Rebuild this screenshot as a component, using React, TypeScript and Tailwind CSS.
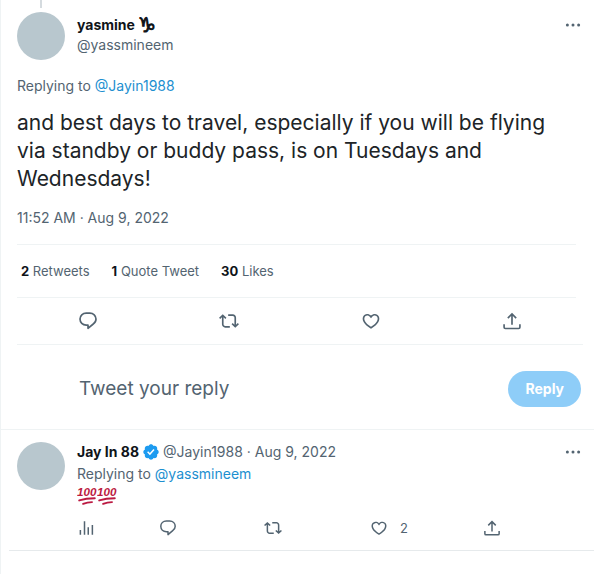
import React from "react";

type IconProps = { className?: string };

const ReplyIcon = ({ className }: IconProps) => (
  <svg viewBox="0 0 24 24" fill="none" stroke="currentColor" strokeWidth="2" strokeLinejoin="round" className={className} aria-hidden="true">
    <path d="M9.8 2.5h4.4c4.200 0 7.400 3.100 7.400 7.200 0 2.500-1.300 4.600-3.300 5.900L12 20.800v-3.900H9.800c-4.200 0-7.400-3.100-7.400-7.200s3.200-7.200 7.400-7.200z" />
  </svg>
);

const RetweetIcon = ({ className }: IconProps) => (
  <svg viewBox="0 0 24 24" fill="currentColor" className={className} aria-hidden="true">
    <path d="M4.5 3.88l4.432 4.14-1.364 1.46L5.5 7.55V16c0 1.1.896 2 2 2H13v2H7.5c-2.209 0-4-1.79-4-4V7.55L1.432 9.48.068 8.02 4.5 3.88zM16.5 6H11V4h5.5c2.209 0 4 1.79 4 4v8.45l2.068-1.93 1.364 1.46-4.432 4.14-4.432-4.14 1.364-1.46 2.068 1.93V8c0-1.1-.896-2-2-2z" />
  </svg>
);

const LikeIcon = ({ className }: IconProps) => (
  <svg viewBox="0 0 24 24" fill="currentColor" className={className} aria-hidden="true">
    <path d="M16.697 5.5c-1.222-.06-2.679.51-3.89 2.16l-.805 1.09-.806-1.09C9.984 6.01 8.526 5.44 7.304 5.5c-1.243.07-2.349.78-2.91 1.91-.552 1.12-.633 2.78.479 4.82 1.074 1.97 3.257 4.27 7.129 6.61 3.87-2.34 6.052-4.64 7.126-6.61 1.111-2.04 1.03-3.7.477-4.82-.561-1.13-1.666-1.84-2.908-1.91zm4.187 7.69c-1.351 2.48-4.001 5.12-8.379 7.67l-.503.3-.504-.3c-4.379-2.55-7.029-5.19-8.382-7.67-1.36-2.5-1.41-4.86-.514-6.67.887-1.79 2.647-2.91 4.601-3.01 1.651-.09 3.368.56 4.798 2.01 1.429-1.45 3.146-2.1 4.796-2.01 1.954.1 3.714 1.22 4.601 3.01.896 1.81.846 4.17-.514 6.67z" />
  </svg>
);

const ShareIcon = ({ className }: IconProps) => (
  <svg viewBox="0 0 24 24" fill="none" stroke="currentColor" strokeWidth="2" className={className} aria-hidden="true">
    <path d="M12 16.5V4M7 8.500l5-5 5 5" />
    <path d="M2.5 16v3.500c0 .8.7 1.500 1.500 1.500h16c.8 0 1.500-.7 1.500-1.500V16" />
  </svg>
);

const StatsIcon = ({ className }: IconProps) => (
  <svg viewBox="0 0 24 24" fill="none" stroke="currentColor" strokeWidth="2" className={className} aria-hidden="true">
    <path d="M4.5 21v-6.500M10 21V3M15 21V11M20.5 21V8" />
  </svg>
);

const MoreIcon = ({ className }: IconProps) => (
  <svg viewBox="0 0 24 24" fill="currentColor" className={className} aria-hidden="true">
    <circle cx="4.5" cy="12" r="2" />
    <circle cx="12" cy="12" r="2" />
    <circle cx="19.5" cy="12" r="2" />
  </svg>
);

const VerifiedIcon = ({ className }: IconProps) => (
  <svg viewBox="0 0 24 24" fill="currentColor" className={className} role="img" aria-label="Verified account">
    <path d="M22.25 12c0-1.43-.88-2.67-2.19-3.34.46-1.39.2-2.9-.81-3.91s-2.52-1.27-3.91-.81c-.66-1.31-1.91-2.19-3.34-2.19s-2.67.88-3.33 2.19c-1.4-.46-2.91-.2-3.92.81s-1.26 2.52-.8 3.91c-1.31.67-2.2 1.91-2.2 3.34s.89 2.67 2.2 3.34c-.46 1.39-.21 2.9.8 3.91s2.52 1.26 3.91.81c.67 1.31 1.91 2.19 3.34 2.19s2.68-.88 3.34-2.19c1.39.45 2.9.2 3.91-.81s1.27-2.52.81-3.91c1.31-.67 2.19-1.91 2.19-3.34zm-11.71 4.2L6.8 12.46l1.41-1.42 2.26 2.26 4.8-5.23 1.47 1.36-6.2 6.77z" />
  </svg>
);

// "100 points" emoji
const HundredEmoji = () => (
  <svg viewBox="0 0 36 36" className="h-5 w-5" role="img" aria-label="100 points">
    <text x="0" y="18" fill="#bb1a42" fontSize="21" fontWeight="700" fontStyle="italic" fontFamily="Liberation Sans, sans-serif">
      100
    </text>
    <g fill="none" stroke="#bb1a42" strokeWidth="3.5" strokeLinecap="round">
      <path d="M4 26c9-3 19-4 28-4" />
      <path d="M11 32c5-2 10-3 16-3" />
    </g>
  </svg>
);

const stats = [
  { value: 2, label: "Retweets" },
  { value: 1, label: "Quote Tweet" },
  { value: 30, label: "Likes" },
];

const actions = [
  { label: "Reply", Icon: ReplyIcon },
  { label: "Retweet", Icon: RetweetIcon },
  { label: "Like", Icon: LikeIcon },
  { label: "Share", Icon: ShareIcon },
];

const Avatar = () => <div className="h-12 w-12 shrink-0 rounded-full bg-[#b8c7ce]" />;

const MoreButton = () => (
  <button type="button" aria-label="More" className="flex h-5 w-5 items-center justify-center text-[#536471]">
    <MoreIcon className="h-[18px] w-[18px]" />
  </button>
);

const TweetDetail = () => (
  <article className="pl-4">
    <div className="flex h-3 w-12 justify-center">
      <div className="h-2 w-0.5 bg-[#d5dbdf]" />
    </div>
    <header className="flex items-start gap-3 pr-[11px]">
      <Avatar />
      <div className="flex-1 pt-[3px] leading-5">
        <div className="flex items-center justify-between">
          <p className="flex items-center gap-[3px] font-bold">
            yasmine <span className="font-['DejaVu_Sans'] text-[20px] leading-5 [-webkit-text-stroke:1px]">♑︎</span>
          </p>
          <MoreButton />
        </div>
        <p className="text-[#536471]">@yassmineem</p>
      </div>
    </header>

    <p className="mt-4 leading-5 text-[#536471]">
      Replying to <a href="#jayin1988" className="text-[#1d8fd0]">@Jayin1988</a>
    </p>
    <p className="mt-[13px] pr-5 text-[21px] leading-7 text-[#202427]">
      and best days to travel, especially if you will be flying via standby or buddy pass, is on Tuesdays and Wednesdays!
    </p>
    <p className="mt-[15px] leading-5 text-[#536471]">11:52 AM · Aug 9, 2022</p>

    <ul className="mt-4 mr-[18px] flex gap-[22px] border-y border-[#eff3f4] px-1 py-4 text-[13px] leading-5">
      {stats.map((s) => (
        <li key={s.label} className="text-[#536471]">
          <span className="font-bold text-[#0f1419]">{s.value}</span> {s.label}
        </li>
      ))}
    </ul>

    <div className="mr-[11px] flex border-b border-[#eff3f4] py-[13px] text-[#536471]">
      {actions.map(({ label, Icon }) => (
        <button key={label} type="button" aria-label={label} className="flex flex-1 justify-center">
          <Icon className="h-5 w-5" />
        </button>
      ))}
    </div>
  </article>
);

const ReplyForm = () => (
  <form className="flex items-center border-b border-[#eff3f4] pt-[26px] pr-[13px] pb-[22px] pl-[78px]" onSubmit={(e) => e.preventDefault()}>
    <input
      type="text"
      aria-label="Tweet your reply"
      placeholder="Tweet your reply"
      className="min-w-0 flex-1 text-[19px] outline-none placeholder:text-[#536471]"
    />
    <button type="submit" className="h-9 rounded-full bg-[#8ecdf8] px-[17px] font-bold text-white">
      Reply
    </button>
  </form>
);

const ReplyTweet = () => (
  <article className="ml-2 flex gap-3 border-b border-[#e6eaec] py-3 pr-[11px] pl-2">
    <Avatar />
    <div className="min-w-0 flex-1">
      <div className="flex items-center justify-between">
        <p className="flex items-center gap-[3px] leading-5">
          <span className="font-bold">Jay In 88</span>
          <VerifiedIcon className="h-[18px] w-[18px] text-[#1d9bf0]" />
          <span className="text-[#536471]">@Jayin1988 · Aug 9, 2022</span>
        </p>
        <MoreButton />
      </div>
      <p className="leading-6 text-[#536471]">
        Replying to <a href="#yassmineem" className="text-[#1d8fd0]">@yassmineem</a>
      </p>
      <p className="flex h-5 items-center">
        <HundredEmoji />
        <HundredEmoji />
      </p>
      <div className="mt-3 grid grid-cols-[82fr_105fr_106fr_113fr_100fr] items-center text-[#536471]">
        <button type="button" aria-label="View stats"><StatsIcon className="h-[18px] w-[18px]" /></button>
        <button type="button" aria-label="Reply"><ReplyIcon className="h-[18px] w-[18px]" /></button>
        <button type="button" aria-label="Retweet"><RetweetIcon className="h-[18px] w-[18px]" /></button>
        <button type="button" aria-label="Like" className="flex items-center gap-3 text-[13px] leading-5">
          <LikeIcon className="h-[18px] w-[18px]" />2
        </button>
        <button type="button" aria-label="Share"><ShareIcon className="h-[18px] w-[18px]" /></button>
      </div>
    </div>
  </article>
);

export default function App() {
  return (
    <main className="min-h-screen border-l border-[#eff3f4] bg-white font-[Inter,'DejaVu_Sans',sans-serif] text-sm text-[#0f1419]">
      <TweetDetail />
      <ReplyForm />
      <ReplyTweet />
    </main>
  );
}
